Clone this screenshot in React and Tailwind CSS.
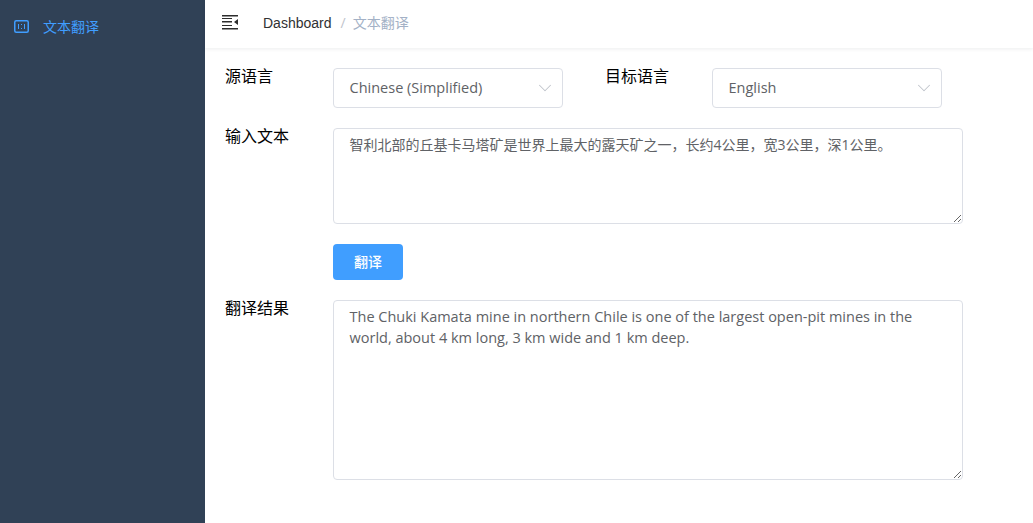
import { ChevronDown } from "lucide-react";

const cjk = "font-['Open_Sans','Noto_Sans_CJK_SC',sans-serif]";

function FieldLabel({ children, className = "" }) {
  return (
    <label className={`text-[16px] leading-[16px] text-black font-['Noto_Sans_CJK_SC',sans-serif] ${className}`}>
      {children}
    </label>
  );
}

function SelectBox({ value }) {
  return (
    <div className="flex h-10 w-[230px] items-center justify-between rounded border border-[#dcdfe6] pl-[15.5px] pr-[6px] text-[14.5px] text-[#606266]">
      <span>{value}</span>
      <ChevronDown size={22} strokeWidth={1.1} className="text-[#c0c4cc]" />
    </div>
  );
}

function TextBox({ value, className }) {
  return (
    <textarea
      readOnly
      value={value}
      className={`block w-[630px] rounded border border-[#dcdfe6] px-[15.5px] py-[5px] leading-[21px] text-[#606266] outline-none ${className}`}
    />
  );
}

export default function App() {
  return (
    <div className={`flex h-[523px] w-[1033px] overflow-hidden bg-white ${cjk}`}>
      <aside className="w-[205px] shrink-0 bg-[#304156]">
        <div className="flex items-center pl-[14px] pt-[17px] text-sm leading-5 text-[#409eff]">
          <svg width="15" height="13" viewBox="0 0 15 13" fill="none" stroke="currentColor" className="mb-[1px] mr-[14px]">
            <rect x="0.75" y="0.75" width="13.5" height="11.5" rx="1.5" strokeWidth="1.5" />
            <path d="M4.5 4v5M7.5 4v1M7.5 8v1M10.5 4v5" strokeWidth="1" />
          </svg>
          <span>文本翻译</span>
        </div>
      </aside>

      <main className="min-w-0 flex-1">
        <header className="flex h-12 items-center bg-white pl-[17px] shadow-[0_1px_4px_rgba(0,21,41,0.08)]">
          <svg width="16" height="15" viewBox="0 0 16 15" className="mb-[3px] text-[#2d2d2d]" fill="currentColor">
            <path d="M0 0h16v1.5H0zM0 6h10v1.5H0zM0 13h16v1.5H0zM0 3h10v1H0zM0 10h10v1H0zM16 4v6l-4-3z" />
          </svg>
          <nav className="ml-[25px] mb-[2px] flex items-center text-sm text-[#303133]">
            <span className="font-['Liberation_Sans',sans-serif]">Dashboard</span>
            <span className="ml-[9px] mr-[7px] text-[#c0c4cc]">/</span>
            <span className="text-[#a3b1c6]">文本翻译</span>
          </nav>
        </header>

        <form className="flex flex-col gap-5 pl-5 pt-5">
          <div className="flex items-start">
            <FieldLabel className="w-[108px] -mt-[1px]">源语言</FieldLabel>
            <SelectBox value="Chinese (Simplified)" />
            <FieldLabel className="ml-[42px] w-[107px] -mt-[1px]">目标语言</FieldLabel>
            <SelectBox value="English" />
          </div>
          <div className="flex items-start">
            <FieldLabel className="w-[108px] -mt-[1px]">输入文本</FieldLabel>
            <TextBox value="智利北部的丘基卡马塔矿是世界上最大的露天矿之一，长约4公里，宽3公里，深1公里。" className="h-24 text-sm" />
          </div>
          <div className="pl-[108px]">
            <button type="button" className="h-9 w-[70px] rounded bg-[#409eff] text-sm font-medium leading-none text-white">
              翻译
            </button>
          </div>
          <div className="flex items-start">
            <FieldLabel className="w-[108px] -mt-[1px]">翻译结果</FieldLabel>
            <TextBox value="The Chuki Kamata mine in northern Chile is one of the largest open-pit mines in the world, about 4 km long, 3 km wide and 1 km deep." className="h-[180px] text-[14.5px]" />
          </div>
        </form>
      </main>
    </div>
  );
}
